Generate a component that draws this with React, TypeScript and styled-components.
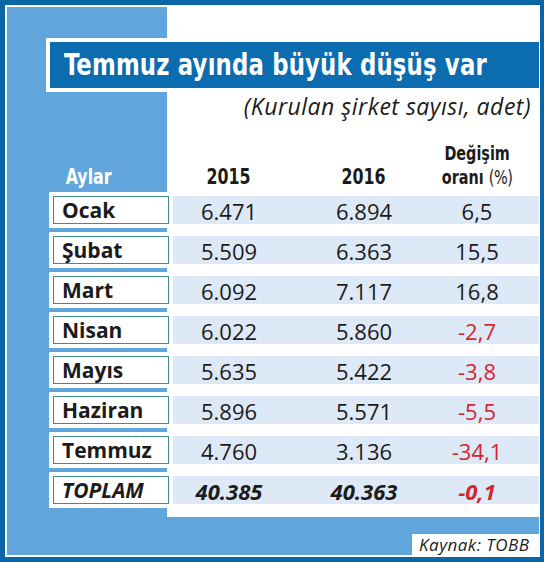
import React from 'react'
import styled, { createGlobalStyle } from 'styled-components'

const FRAME_BLUE = '#0a66a5'
const TITLE_BLUE = '#0b6cb0'
const PANEL_BLUE = '#60a6dc'
const BAND_BLUE = '#dde9f6'
const BOX_TEAL = '#3d8d93'
const INK = '#1b1b1b'
const NEGATIVE_RED = '#d3262e'

const CONDENSED = '"DejaVu Sans Condensed", "DejaVu Sans", sans-serif'
const HUMANIST = '"Open Sans", "Noto Sans", sans-serif'

// 2015 / 2016 / change columns inside the blue band
const COLS = '112px 158px 68px 1fr'

interface RowData {
  month: string
  y2015: string
  y2016: string
  change: string
  total?: boolean
}

const ROWS: RowData[] = [
  { month: 'Ocak', y2015: '6.471', y2016: '6.894', change: '6,5' },
  { month: 'Şubat', y2015: '5.509', y2016: '6.363', change: '15,5' },
  { month: 'Mart', y2015: '6.092', y2016: '7.117', change: '16,8' },
  { month: 'Nisan', y2015: '6.022', y2016: '5.860', change: '-2,7' },
  { month: 'Mayıs', y2015: '5.635', y2016: '5.422', change: '-3,8' },
  { month: 'Haziran', y2015: '5.896', y2016: '5.571', change: '-5,5' },
  { month: 'Temmuz', y2015: '4.760', y2016: '3.136', change: '-34,1' },
  { month: 'TOPLAM', y2015: '40.385', y2016: '40.363', change: '-0,1', total: true },
]

const GlobalStyle = createGlobalStyle`
  html, body {
    margin: 0;
    padding: 0;
    background: #ffffff;
  }
  * {
    box-sizing: border-box;
  }
`

export default function App() {
  return (
    <>
      <GlobalStyle />
      <Frame>
        <Canvas>
          <Sheet />
          <Content>
            <TitleBox>
              <Title>Temmuz ayında büyük düşüş var</Title>
            </TitleBox>
            <Subtitle>(Kurulan şirket sayısı, adet)</Subtitle>

            <HeaderRow>
              <HeaderMonth>
                <Squeeze>Aylar</Squeeze>
              </HeaderMonth>
              <HeaderCols>
                <HeaderCell>
                  <Squeeze>2015</Squeeze>
                </HeaderCell>
                <HeaderCell>
                  <Squeeze>2016</Squeeze>
                </HeaderCell>
                <HeaderCell small>
                  <Squeeze>
                    Değişim
                    <br />
                    oranı <Light>(%)</Light>
                  </Squeeze>
                </HeaderCell>
              </HeaderCols>
            </HeaderRow>

            <Rows>
              {ROWS.map((r) => (
                <Row key={r.month}>
                  <MonthCell>
                    <MonthBox total={!!r.total}>{r.month}</MonthBox>
                  </MonthCell>
                  <Band>
                    <Value total={!!r.total}>{r.y2015}</Value>
                    <Value total={!!r.total}>{r.y2016}</Value>
                    <Value total={!!r.total} negative={r.change.startsWith('-')}>
                      {r.change}
                    </Value>
                  </Band>
                </Row>
              ))}
            </Rows>

            <Source>Kaynak: TOBB</Source>
          </Content>
        </Canvas>
      </Frame>
    </>
  )
}

const Frame = styled.div`
  width: 544px;
  height: 562px;
  overflow: hidden;
  border-style: solid;
  border-color: ${FRAME_BLUE};
  border-width: 5px 4px 5px 5px;
  padding: 2px 1px 2px 2px;
  background: #ffffff;
`

// the sheet and the content share one grid cell so they stack
const Canvas = styled.div`
  display: grid;
  grid-template-columns: minmax(0, 1fr);
  grid-template-rows: minmax(0, 1fr);
  height: 100%;
  background: ${PANEL_BLUE};
`

const Sheet = styled.div`
  grid-area: 1 / 1;
  margin: 0 0 38px 160px;
  background: #ffffff;
`

const Content = styled.div`
  grid-area: 1 / 1;
  display: flex;
  flex-direction: column;
  padding-top: 31px;
  min-width: 0;
  min-height: 0;
`

const TitleBox = styled.div`
  margin-left: 39px;
  height: 54px;
  border: 4px solid #ffffff;
  border-right: 0;
  background: ${TITLE_BLUE};
  display: flex;
  align-items: center;
  padding-left: 14px;
  overflow: hidden;
`

// no condensed black face is installed, so the condensed face is narrowed further
const Title = styled.h1`
  margin: 0;
  font-family: ${CONDENSED};
  font-weight: 700;
  font-size: 30px;
  line-height: 1;
  letter-spacing: 0.2px;
  color: #ffffff;
  white-space: nowrap;
  transform: scaleX(0.845);
  transform-origin: left center;
`

const Subtitle = styled.div`
  margin-top: 1px;
  height: 26px;
  padding-right: 8px;
  text-align: right;
  font-family: ${HUMANIST};
  font-style: italic;
  font-size: 23px;
  line-height: 26px;
  letter-spacing: 0.5px;
  color: ${INK};
  white-space: nowrap;
`

const Squeeze = styled.span`
  display: inline-block;
  transform: scaleX(0.8);
`

const HeaderRow = styled.div`
  display: flex;
  align-items: flex-end;
  margin: 22px 0 3px 42px;
  height: 48px;
`

const HeaderMonth = styled.div`
  width: 124px;
  padding-left: 11px;
  font-family: ${CONDENSED};
  font-weight: 700;
  font-size: 22px;
  line-height: 24px;
  color: #ffffff;
`

const HeaderCols = styled.div`
  flex: 1;
  display: grid;
  grid-template-columns: ${COLS};
  align-items: end;
`

const HeaderCell = styled.div<{ small?: boolean }>`
  display: flex;
  justify-content: center;
  text-align: center;
  font-family: ${CONDENSED};
  font-weight: 700;
  font-size: ${(p) => (p.small ? '20px' : '22px')};
  line-height: 24px;
  color: ${INK};
  white-space: nowrap;
`

const Light = styled.span`
  font-weight: 400;
  letter-spacing: -0.5px;
`

const Rows = styled.div`
  display: flex;
  flex-direction: column;
  gap: 4px;
`

const Row = styled.div`
  display: flex;
  align-items: center;
  padding-left: 42px;
  height: 36px;
`

const MonthCell = styled.div`
  width: 120px;
  height: 36px;
  padding: 4px 0 4px 4px;
  background: #ffffff;
`

const MonthBox = styled.div<{ total: boolean }>`
  height: 28px;
  border: 1px solid ${BOX_TEAL};
  padding-left: 8px;
  display: flex;
  align-items: center;
  font-family: ${HUMANIST};
  font-weight: 700;
  font-style: ${(p) => (p.total ? 'italic' : 'normal')};
  font-size: 21px;
  color: ${INK};
  white-space: nowrap;
`

const Band = styled.div`
  flex: 1;
  margin-left: 4px;
  height: 28px;
  display: grid;
  grid-template-columns: ${COLS};
  align-items: center;
  background: ${BAND_BLUE};
`

const Value = styled.div<{ total: boolean; negative?: boolean }>`
  text-align: center;
  font-family: ${HUMANIST};
  font-size: 22px;
  font-weight: ${(p) => (p.total ? 700 : 400)};
  font-style: ${(p) => (p.total ? 'italic' : 'normal')};
  color: ${(p) => (p.negative ? NEGATIVE_RED : INK)};
  white-space: nowrap;
`

const Source = styled.div`
  margin-top: auto;
  align-self: flex-end;
  width: 127px;
  height: 21px;
  padding-left: 7px;
  background: #ffffff;
  font-family: ${HUMANIST};
  font-style: italic;
  font-size: 17px;
  line-height: 21px;
  letter-spacing: 0.5px;
  color: ${INK};
  white-space: nowrap;
`
